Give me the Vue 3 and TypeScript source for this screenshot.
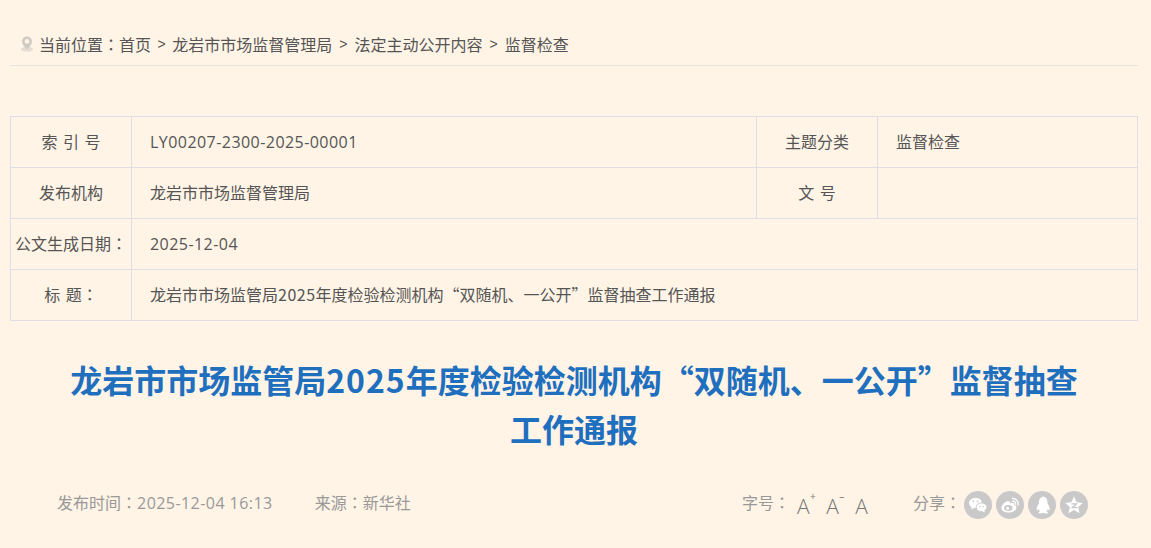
<script setup lang="ts">
interface Crumb { label: string }
const crumbs: Crumb[] = [
  { label: '首页' },
  { label: '龙岩市市场监督管理局' },
  { label: '法定主动公开内容' },
  { label: '监督检查' },
]
</script>

<template>
  <div class="page">
    <div class="crumbs">
      <svg class="pin" width="14" height="16" viewBox="0 0 14 16">
        <ellipse cx="7" cy="13.2" rx="6" ry="2.4" fill="#e3ddd3" />
        <path d="M7 0.5a5 5 0 0 1 5 5c0 3-3 5.6-5 8-2-2.4-5-5-5-8a5 5 0 0 1 5-5z" fill="#cfcbc4" />
        <circle cx="7" cy="5.4" r="2.3" fill="#fff4e6" />
      </svg>
      <span>当前位置<span class="colon">：</span></span>
      <template v-for="(c, i) in crumbs" :key="c.label">
        <span v-if="i > 0" class="sep" :class="{ tight: i === 1 }">&gt;</span>
        <span>{{ c.label }}</span>
      </template>
    </div>

    <table class="info">
      <colgroup>
        <col class="c1" /><col class="c2" /><col class="c3" /><col class="c4" />
      </colgroup>
      <tbody>
        <tr>
          <th class="spaced">索 引 号</th>
          <td class="latin">LY00207-2300-2025-00001</td>
          <th>主题分类</th>
          <td>监督检查</td>
        </tr>
        <tr>
          <th>发布机构</th>
          <td>龙岩市市场监督管理局</td>
          <th class="spaced">文 号</th>
          <td></td>
        </tr>
        <tr>
          <th>公文生成日期<span class="colon">：</span></th>
          <td colspan="3" class="latin">2025-12-04</td>
        </tr>
        <tr>
          <th class="spaced">标 题<span class="colon">：</span></th>
          <td colspan="3">龙岩市市场监管局<span class="yr">2025</span>年度检验检测机构“双随机、一公开”监督抽查工作通报</td>
        </tr>
      </tbody>
    </table>

    <h1 class="title">龙岩市市场监管局<span class="yr">2025</span>年度检验检测机构“双随机、一公开”监督抽查工作通报</h1>

    <div class="meta">
      <div class="left">
        <span>发布时间<span class="colon">：</span><span class="latin">2025-12-04 16:13</span></span>
        <span>来源<span class="colon">：</span>新华社</span>
      </div>
      <div class="right">
        <span class="lbl">字号<span class="colon">：</span></span>
        <span class="a">A<sup>+</sup></span>
        <span class="a">A<sup>–</sup></span>
        <span class="a">A</span>
        <span class="lbl share">分享<span class="colon">：</span></span>
        <span class="ico">
          <svg width="28" height="28" viewBox="0 0 28 28">
            <ellipse cx="11.5" cy="12" rx="6.5" ry="5.3" fill="#fff" />
            <path d="M8 15.5l-1 3 3.4-1.8z" fill="#fff" />
            <ellipse cx="17.5" cy="16.3" rx="5.4" ry="4.4" fill="#fff" stroke="#c9c9c9" stroke-width="1" />
            <path d="M20 19.5l1.4 2-3-1z" fill="#fff" />
            <circle cx="9.3" cy="10.3" r=".9" fill="#c9c9c9" />
            <circle cx="13.5" cy="10.3" r=".9" fill="#c9c9c9" />
            <circle cx="15.8" cy="15.4" r=".7" fill="#c9c9c9" />
            <circle cx="19.3" cy="15.4" r=".7" fill="#c9c9c9" />
          </svg>
        </span>
        <span class="ico">
          <svg width="28" height="28" viewBox="0 0 28 28">
            <path d="M12 10c-3.500 1-6.500 4-6.500 7 0 2.800 3.300 4.500 7 4.500 4.500 0 8-2.300 8-5 0-1.600-1.500-2.300-2.500-2.500.6-1.600-.3-2.600-2.300-2.300l-1.700.5c.2-1.500-.5-2.300-2-1.700z" fill="#fff" />
            <ellipse cx="12.300" cy="17" rx="4.300" ry="3" fill="#c9c9c9" />
            <circle cx="11.600" cy="17.200" r="1.500" fill="#fff" />
            <path d="M16.500 7.500a5.200 5.200 0 0 1 5.500 6.500M16.800 10a2.800 2.800 0 0 1 2.800 3.400" fill="none" stroke="#fff" stroke-width="1.300" stroke-linecap="round" />
          </svg>
        </span>
        <span class="ico">
          <svg width="28" height="28" viewBox="0 0 28 28">
            <path d="M14 5.500c3.500 0 5.500 2.600 5.500 5.900 0 1 .3 1.500.8 2.300 1 1.600 1.800 3.600 1.300 5.500-.5.400-1.300-.4-1.800-1.200-.2 1-.7 1.800-1.400 2.400.9.300 1.700.7 1.600 1.300-.2.700-2.800.9-4.300.4-.4-.1-.6-.1-1 0-1.500.5-4.100.3-4.300-.4-.1-.6.700-1 1.600-1.300-.7-.6-1.200-1.400-1.400-2.400-.5.800-1.300 1.600-1.800 1.200-.5-1.900.3-3.900 1.300-5.500.5-.8.800-1.300.8-2.300 0-3.300 2-5.900 5.500-5.900z" fill="#fff" />
          </svg>
        </span>
        <span class="ico">
          <svg width="28" height="28" viewBox="0 0 28 28">
            <path d="M14 5.500l2.600 5.700 6.200.7-4.600 4.200 1.300 6.100-5.500-3.100-5.500 3.100 1.300-6.100-4.600-4.200 6.200-.7z" fill="#fff" />
            <path d="M11.300 12.800h5.200l-4.300 3.900h5" fill="none" stroke="#c9c9c9" stroke-width="1.300" />
          </svg>
        </span>
      </div>
    </div>
  </div>
</template>

<style>
html, body { margin: 0; background: #fff4e6; }
</style>

<style scoped>
.page {
  box-sizing: border-box;
  width: 1151px;
  height: 548px;
  overflow: hidden;
  padding: 0 13px 0 10px;
  background: #fff4e6;
  font-family: "Noto Sans CJK SC", "Open Sans", sans-serif;
  color: #555;
}
.colon { font-family: "Noto Sans CJK TC", sans-serif; }
.crumbs {
  box-sizing: border-box;
  height: 66px;
  padding: 22px 0 0 10px;
  display: flex;
  align-items: center;
  border-bottom: 1px solid #e6e2dc;
  font-size: 16px;
  line-height: 42px;
  color: #555;
}
.pin { margin-right: 5px; }
.sep { margin: 0 7px; font-family: "Liberation Sans", sans-serif; font-size: 14px; }
.sep.tight { margin: 0 6.5px; }
.info {
  margin-top: 50px;
  width: 1127px;
  border-collapse: collapse;
  table-layout: fixed;
  font-size: 16px;
  line-height: 22px;
}
.c1 { width: 121px; }
.c2 { width: 625px; }
.c3 { width: 121px; }
.c4 { width: 260px; }
.info th, .info td {
  height: 51px;
  padding: 0 0 3px;
  box-sizing: border-box;
  border: 1px solid #dedfe6;
  font-weight: 400;
  color: #555;
}
.info th { text-align: center; white-space: nowrap; }
.info td { padding-left: 18px; text-align: left; }
.info td.latin { padding-bottom: 1px; }
.spaced { word-spacing: 2px; }
.latin { font-family: "Open Sans", "Noto Sans CJK SC", sans-serif; letter-spacing: .45px; }
.yr { letter-spacing: .5px; }
.title {
  margin: 34px 50px 0;
  font-size: 32px;
  line-height: 49px;
  font-weight: 700;
  text-align: center;
  color: #1f6fbf;
}
.title .yr { letter-spacing: 1px; }
.meta {
  margin-top: 37px;
  display: flex;
  justify-content: space-between;
  align-items: flex-start;
  font-size: 16px;
  line-height: 24px;
  color: #999;
  padding: 0 50px 0 47px;
}
.left { display: flex; gap: 42px; }
.right { display: flex; align-items: flex-start; }
.lbl { margin-right: 7px; }
.share { margin-left: 28.5px; margin-right: 3px; }
.a { font-family: "Open Sans", sans-serif; font-weight: 300; font-size: 21px; line-height: 28px; color: #777; margin-right: 16.5px; margin-top: 2px; position: relative; }
.a sup { position: absolute; top: -3px; left: 13px; font-size: 10px; line-height: 14px; font-weight: 400; }
.ico {
  width: 28px;
  height: 28px;
  border-radius: 50%;
  background: #c9c9c9;
  margin-right: 4px;
  margin-top: 1px;
  display: flex;
}
.ico:last-child { margin-right: 0; }
</style>
